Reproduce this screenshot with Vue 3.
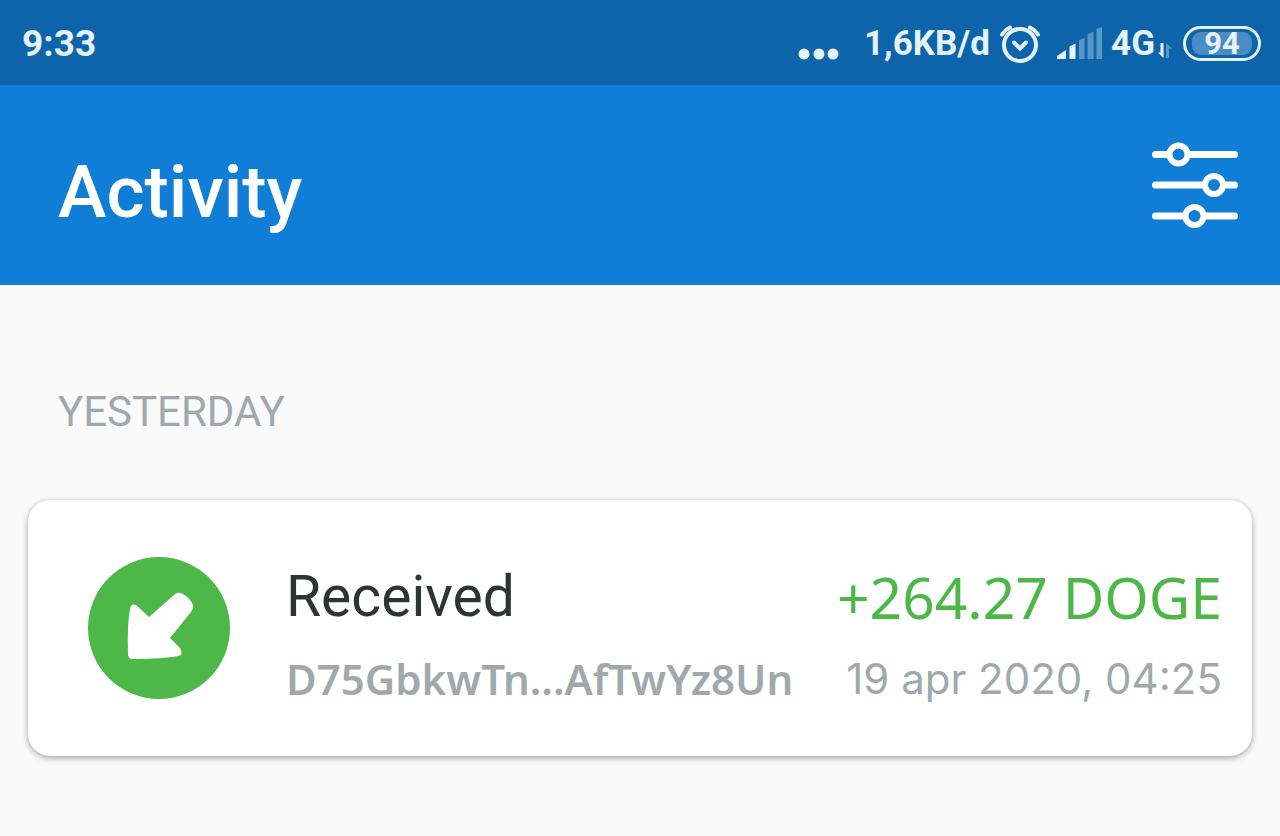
<template>
  <div class="screen">
    <!-- system status bar -->
    <div class="status-bar">
      <span class="time">9:33</span>
      <div class="status-right">
        <svg class="dots" width="42" height="12" viewBox="0 0 42 12" aria-hidden="true">
          <circle cx="6" cy="6" r="5.500" />
          <circle cx="21" cy="6" r="5.500" />
          <circle cx="35" cy="6" r="5.500" />
        </svg>
        <span class="speed">1,6KB/d</span>
        <svg class="alarm" width="42" height="42" viewBox="0 0 42 42" aria-hidden="true">
          <circle cx="21" cy="22" r="16" />
          <path d="M15 19.500l6 6 6-6M3 11.500Q6 7 11 4.500M39 11.500Q36 7 31 4.500" />
        </svg>
        <svg class="signal" width="46" height="34" viewBox="0 0 46 34" aria-hidden="true">
          <path d="M0 32v-3l9-6v9zM12.500 19.500l6-3V32h-6z" />
          <path class="off" d="M22 13.500l5.500-3V32H22zM30.500 7.500l6-3V32h-6zM39.500 2l5.500-2v32h-5.500z" />
        </svg>
        <span class="network">4G</span>
        <svg class="arrows" width="16" height="16" viewBox="0 0 16 16" aria-hidden="true">
          <path d="M3.500 0h3v15L1 9.500h2.500z" />
          <path class="off" d="M9 15V0l6 5.500h-3V15z" />
        </svg>
        <span class="battery"><span class="level">{{ battery }}</span></span>
      </div>
    </div>

    <header class="app-bar">
      <h1>Activity</h1>
      <button class="filter-button" aria-label="Filter">
        <svg width="86" height="86" viewBox="0 0 86 86">
          <path d="M3.500 12.500h79M3.500 43h79M3.500 74h79" />
          <circle cx="26.500" cy="12.500" r="9" />
          <circle cx="62" cy="43" r="9" />
          <circle cx="42.500" cy="74" r="9" />
        </svg>
      </button>
    </header>

    <main>
      <section v-for="group in groups" :key="group.label">
        <h2>{{ group.label }}</h2>
        <article v-for="tx in group.items" :key="tx.address" class="card">
          <svg class="tx-icon" width="142" height="142" viewBox="0 0 142 142" aria-hidden="true">
            <circle cx="71" cy="71" r="71" fill="#4db848" />
            <path
              fill="#fff"
              d="M61 60L86 38Q90 34 95 37Q102 41 105 48Q106 51 103 55L82 81L92 91Q96 98 90 99Q76 102 45 102Q40 102 40 97Q39 68 42 52Q43 46 48 48Z"
            />
          </svg>
          <div class="info">
            <div class="row main-row">
              <span class="type">{{ tx.type }}</span>
              <span class="amount">{{ tx.amount }}</span>
            </div>
            <div class="row sub-row">
              <span class="address">{{ tx.address }}</span>
              <time>{{ tx.date }}</time>
            </div>
          </div>
        </article>
      </section>
    </main>
  </div>
</template>

<script setup>
import { ref } from 'vue'

const battery = ref(94)

const groups = ref([
  {
    label: 'YESTERDAY',
    items: [
      {
        type: 'Received',
        amount: '+264.27 DOGE',
        address: 'D75GbkwTn...AfTwYz8Un',
        date: '19 apr 2020, 04:25'
      }
    ]
  }
])
</script>

<style>
body {
  margin: 0;
  background: #fafafa;
}
</style>

<style scoped>
.screen {
  min-height: 100vh;
  background: #fafafa;
  font-family: Roboto, sans-serif;
}

.status-bar {
  display: flex;
  justify-content: space-between;
  align-items: center;
  box-sizing: border-box;
  height: 85px;
  padding: 2px 19px 0 22px;
  background: #0d64aa;
  color: #e4f3fc;
  font-size: 37px;
  font-weight: 700;
}

.status-right {
  display: flex;
  align-items: center;
  font-size: 35px;
}

.status-right svg {
  fill: #e4f3fc;
}

.status-right .off {
  opacity: 0.35;
}

.dots {
  margin: 20px 24px 0 0;
}

.status-right .alarm {
  margin: 0 16px 0 9px;
  fill: none;
  stroke: #e4f3fc;
  stroke-width: 4;
  stroke-linecap: round;
}

.signal {
  margin-right: 8px;
}

.arrows {
  margin: 14px 10px 0 2px;
}

.battery {
  box-sizing: border-box;
  width: 78px;
  height: 35px;
  padding: 3px 6px;
  border: 3px solid #e4f3fc;
  border-radius: 18px;
}

.level {
  display: block;
  border-radius: 9px;
  background: #4a8cc4;
  font-size: 31px;
  line-height: 23px;
  text-align: center;
}

.app-bar {
  display: flex;
  justify-content: space-between;
  align-items: center;
  height: 200px;
  padding: 0 42px 0 58px;
  background: #107dd6;
  color: #fff;
}

h1 {
  margin: 14px 0 0;
  font-size: 73px;
  font-weight: 500;
  line-height: 96px;
}

.filter-button {
  display: flex;
  padding: 0;
  border: none;
  background: none;
  cursor: pointer;
}

.filter-button svg {
  fill: #107dd6;
  stroke: #fff;
  stroke-width: 7;
  stroke-linecap: round;
}

.filter-button circle {
  stroke-width: 6;
}

main {
  padding: 97px 28px 0;
}

h2 {
  margin: 0 30px 58px;
  color: #9fa9ac;
  font-size: 42px;
  font-weight: 400;
  line-height: 60px;
}

.card {
  display: flex;
  align-items: flex-start;
  gap: 56px;
  padding: 57px 30px 47px 60px;
  border-radius: 22px;
  background: #fff;
  box-shadow: 0 2px 6px rgba(0, 0, 0, 0.35);
}

.tx-icon {
  flex: none;
}

.info {
  flex: 1;
  min-width: 0;
  padding-top: 4px;
}

.row {
  display: flex;
  justify-content: space-between;
  align-items: center;
  white-space: nowrap;
}

.main-row {
  margin-bottom: 16px;
  font-size: 57px;
  line-height: 72px;
}

.sub-row {
  color: #9fa9ac;
  font-family: Inter, sans-serif;
  font-size: 42px;
  line-height: 60px;
}

.type {
  color: #303333;
}

.amount {
  color: #4db848;
  font-family: "Noto Sans", sans-serif;
}

.address {
  font-family: "Noto Sans", sans-serif;
  font-weight: 600;
}
</style>
